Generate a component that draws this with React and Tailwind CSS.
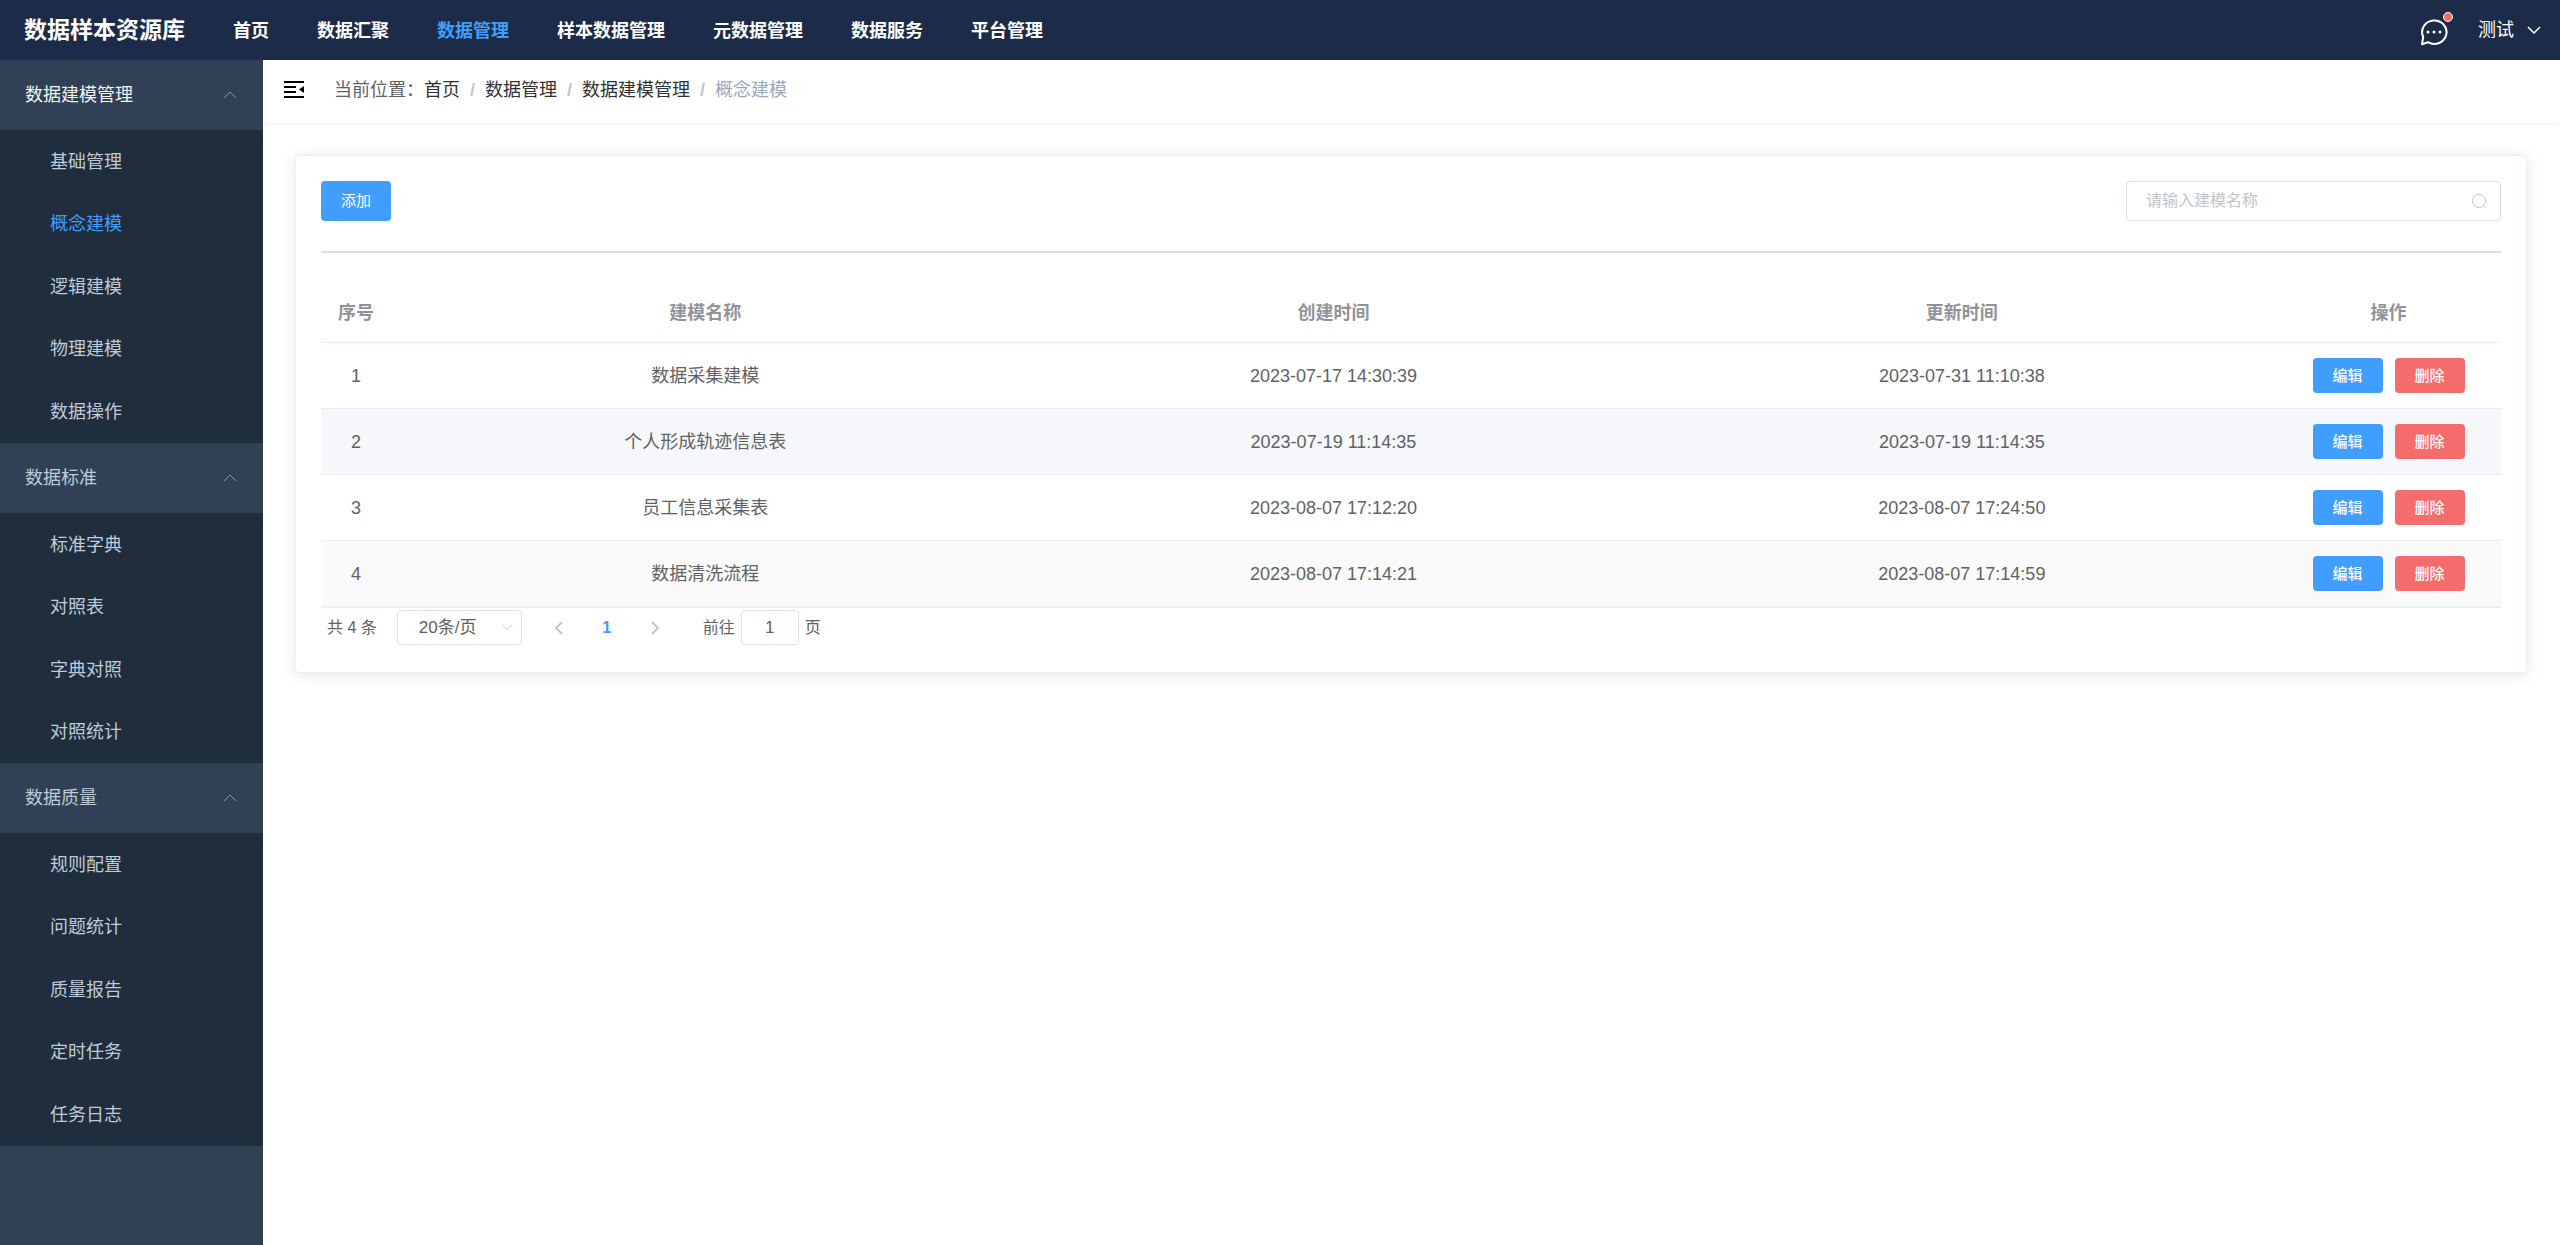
import React, { useState } from 'react';

const navItems = ['首页', '数据汇聚', '数据管理', '样本数据管理', '元数据管理', '数据服务', '平台管理'];

const menuGroups = [
  { title: '数据建模管理', items: ['基础管理', '概念建模', '逻辑建模', '物理建模', '数据操作'] },
  { title: '数据标准', items: ['标准字典', '对照表', '字典对照', '对照统计'] },
  { title: '数据质量', items: ['规则配置', '问题统计', '质量报告', '定时任务', '任务日志'] },
];

const crumbs = ['首页', '数据管理', '数据建模管理', '概念建模'];

const rows = [
  { id: 1, name: '数据采集建模', created: '2023-07-17 14:30:39', updated: '2023-07-31 11:10:38' },
  { id: 2, name: '个人形成轨迹信息表', created: '2023-07-19 11:14:35', updated: '2023-07-19 11:14:35' },
  { id: 3, name: '员工信息采集表', created: '2023-08-07 17:12:20', updated: '2023-08-07 17:24:50' },
  { id: 4, name: '数据清洗流程', created: '2023-08-07 17:14:21', updated: '2023-08-07 17:14:59' },
];

const rowBackground = ['bg-white', 'bg-[#f5f7fa]', 'bg-white', 'bg-[#fafafa]'];

const Chevron = ({ direction, className }) => {
  const paths = {
    up: 'M2 11 L8 5 L14 11',
    down: 'M2 5 L8 11 L14 5',
    left: 'M11 2 L5 8 L11 14',
    right: 'M5 2 L11 8 L5 14',
  };
  return (
    <svg viewBox="0 0 16 16" fill="none" stroke="currentColor" className={className} aria-hidden="true">
      <path d={paths[direction]} />
    </svg>
  );
};

const Header = () => {
  const [active, setActive] = useState('数据管理');

  return (
    <header className="flex h-[60px] items-center bg-[#1c2b48] pl-6 pr-[18px] text-white">
      <h1 className="mr-12 text-[23px] font-bold leading-none">数据样本资源库</h1>
      <nav className="flex gap-12 pt-0.5 font-bold">
        {navItems.map(item => (
          <a
            key={item}
            href="#"
            onClick={() => setActive(item)}
            className={item === active ? 'text-[#409eff]' : 'text-white'}
          >
            {item}
          </a>
        ))}
      </nav>
      <div className="ml-auto flex items-center">
        <button type="button" aria-label="消息" className="relative mr-[30px] mt-1 size-7">
          <svg viewBox="0 0 28 28" fill="none" className="size-7" aria-hidden="true">
            <path d="M2 26.2 L3.2 19 A12.2 11.7 0 1 1 8 24.2 Z" stroke="currentColor" strokeWidth="2" strokeLinejoin="round" />
            <g fill="currentColor">
              <circle cx="8" cy="14" r="1.5" />
              <circle cx="14" cy="14" r="1.5" />
              <circle cx="20" cy="14" r="1.5" />
            </g>
          </svg>
          <span className="absolute -right-[5px] -top-1.5 size-2.5 rounded-full border border-white bg-[#f56c6c]" />
        </button>
        <button type="button" className="flex items-center gap-3">
          测试
          <Chevron direction="down" className="size-4 stroke-[1.5]" />
        </button>
      </div>
    </header>
  );
};

const Sidebar = () => {
  const [active, setActive] = useState('概念建模');

  return (
    <aside className="w-[263px] shrink-0 bg-[#304156] text-[#bfcbd9]">
      {menuGroups.map((group, index) => (
        <div key={group.title}>
          <button
            type="button"
            className={`flex h-[70px] w-full items-center justify-between pl-[25px] pr-[25px] ${index === 0 ? 'text-[#f4f4f5]' : ''}`}
          >
            {group.title}
            <Chevron direction="up" className="size-4 text-[#909399]" />
          </button>
          <ul className="bg-[#1f2d3d]">
            {group.items.map(item => (
              <li key={item} className="h-[62px] odd:h-[63px]">
                <a
                  href="#"
                  onClick={() => setActive(item)}
                  className={`flex h-full items-center pl-[50px] ${item === active ? 'text-[#409eff]' : ''}`}
                >
                  {item}
                </a>
              </li>
            ))}
          </ul>
        </div>
      ))}
    </aside>
  );
};

const Breadcrumb = () => (
  <div className="flex h-[63px] items-center pb-[3px] pl-5 shadow-[0_1px_4px_rgba(0,21,41,0.08)]">
    <button type="button" aria-label="收起菜单" className="mr-[29px] text-black">
      <svg viewBox="0 0 22 22" className="size-[22px]" fill="currentColor" aria-hidden="true">
        <path d="M1 2h20v2H1zM1 7h12v2H1zM1 12h12v2H1zM1 17h20v2H1zM21 7v7l-5-3.5z" />
      </svg>
    </button>
    <span className="text-[#606266]">当前位置：</span>
    <ol className="flex">
      {crumbs.map((crumb, index) => (
        <li key={crumb} className="flex">
          {index > 0 && <span className="mx-2.5 font-bold text-[#c0c4cc]">/</span>}
          {index < crumbs.length - 1
            ? <a href="#" className="text-[#303133]">{crumb}</a>
            : <span className="text-[#97a8be]">{crumb}</span>}
        </li>
      ))}
    </ol>
  </div>
);

const ModelTable = () => (
  <div className="border-b border-[#ebeef5]">
    <table className="w-full table-fixed border-separate border-spacing-0 text-center text-[#606266]">
      <colgroup>
        <col className="w-[70px]" />
        <col />
        <col />
        <col />
        <col className="w-[225px]" />
      </colgroup>
      <thead>
        <tr className="h-[60px] text-[#909399] *:border-b *:border-[#ebeef5]">
          <th>序号</th>
          <th>建模名称</th>
          <th>创建时间</th>
          <th>更新时间</th>
          <th>操作</th>
        </tr>
      </thead>
      <tbody>
        {rows.map((row, index) => (
          <tr key={row.id} className={`h-[66px] *:border-b *:border-[#ebeef5] ${rowBackground[index]}`}>
            <td>{row.id}</td>
            <td>{row.name}</td>
            <td>{row.created}</td>
            <td>{row.updated}</td>
            <td>
              <div className="flex justify-center gap-3 text-[15px] font-medium text-white">
                <button type="button" className="h-[35px] w-[70px] rounded bg-[#409eff]">编辑</button>
                <button type="button" className="h-[35px] w-[70px] rounded bg-[#f56c6c]">删除</button>
              </div>
            </td>
          </tr>
        ))}
      </tbody>
    </table>
  </div>
);

const Pagination = () => {
  const [page, setPage] = useState('1');

  return (
    <div className="mt-0.5 flex items-center pl-1.5 text-[16px] text-[#606266]">
      <span>共 4 条</span>
      <div className="relative ml-5">
        <select
          aria-label="每页条数"
          className="h-[35px] w-[125px] appearance-none rounded border border-[#dcdfe6] bg-white pl-[21px] text-[17px]"
        >
          <option>20条/页</option>
        </select>
        <Chevron direction="down" className="pointer-events-none absolute right-2 top-2.5 size-3.5 text-[#c0c4cc]" />
      </div>
      <button type="button" aria-label="上一页" className="ml-[29px] text-[#c0c4cc]">
        <Chevron direction="left" className="size-4 stroke-2" />
      </button>
      <button type="button" className="w-20 font-bold text-[#409eff]">1</button>
      <button type="button" aria-label="下一页" className="text-[#c0c4cc]">
        <Chevron direction="right" className="size-4 stroke-2" />
      </button>
      <label className="ml-10 flex items-center gap-1.5">
        前往
        <input
          value={page}
          onChange={e => setPage(e.target.value)}
          className="h-[35px] w-[58px] rounded border border-[#dcdfe6] text-center text-[17px]"
        />
        页
      </label>
    </div>
  );
};

const App = () => {
  const [keyword, setKeyword] = useState('');

  return (
    <div className="flex min-h-screen flex-col bg-white font-['Liberation_Sans','Noto_Sans_CJK_SC',sans-serif] text-[18px] leading-6">
      <Header />
      <div className="flex flex-1">
        <Sidebar />
        <main className="min-w-0 flex-1">
          <Breadcrumb />
          <section className="ml-8 mr-[33px] mt-8 rounded border border-[#ebeef5] bg-white px-[25px] pb-[27px] pt-[25px] shadow-[0_2px_15px_rgba(0,0,0,0.1)]">
            <div className="flex items-center justify-between">
              <button type="button" className="h-10 w-[70px] rounded bg-[#409eff] text-[15px] text-white">添加</button>
              <div className="relative">
                <input
                  type="text"
                  aria-label="建模名称"
                  placeholder="请输入建模名称"
                  value={keyword}
                  onChange={e => setKeyword(e.target.value)}
                  className="h-10 w-[375px] rounded border border-[#dcdfe6] pl-[19px] pr-10 text-[16px] placeholder:text-[#c0c4cc]"
                />
                <svg viewBox="0 0 16 16" fill="none" stroke="currentColor" className="absolute right-3.5 top-3 size-4 text-[#c0c4cc]" aria-hidden="true">
                  <circle cx="8" cy="8" r="6.5" />
                  <path d="M12.5 12.5 L15 15" />
                </svg>
              </div>
            </div>
            <hr className="my-[30px] border-t-2 border-[#dcdfe6]" />
            <ModelTable />
            <Pagination />
          </section>
        </main>
      </div>
    </div>
  );
};

export default App;
